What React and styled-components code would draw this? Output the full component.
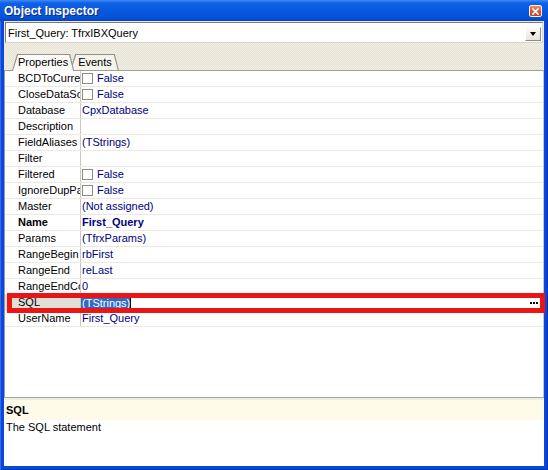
import React from 'react'
import styled, { createGlobalStyle } from 'styled-components'

const GlobalStyle = createGlobalStyle`
  html, body {
    margin: 0;
    padding: 0;
    background: #ffffff;
  }
  body {
    font-family: "Liberation Sans", Arial, sans-serif;
    font-size: 11px;
  }
`

const props = [
  { name: 'BCDToCurrency', value: 'False', check: true },
  { name: 'CloseDataSource', value: 'False', check: true },
  { name: 'Database', value: 'CpxDatabase' },
  { name: 'Description', value: '' },
  { name: 'FieldAliases', value: '(TStrings)' },
  { name: 'Filter', value: '' },
  { name: 'Filtered', value: 'False', check: true },
  { name: 'IgnoreDupParams', value: 'False', check: true },
  { name: 'Master', value: '(Not assigned)' },
  { name: 'Name', value: 'First_Query', bold: true },
  { name: 'Params', value: '(TfrxParams)' },
  { name: 'RangeBegin', value: 'rbFirst' },
  { name: 'RangeEnd', value: 'reLast' },
  { name: 'RangeEndCount', value: '0' },
  { name: 'SQL', value: '(TStrings)', selected: true },
  { name: 'UserName', value: 'First_Query' },
]

const Window = styled.div`
  width: 548px;
  height: 470px;
  display: flex;
  flex-direction: column;
  background: #0b47d9;
  box-shadow: inset 1px 0 #2e6cf0, inset -1px 0 #0636b8, inset 0 -1px #0636b8;
`

const TitleBar = styled.div`
  height: 21px;
  flex-shrink: 0;
  display: flex;
  align-items: center;
  justify-content: space-between;
  padding: 0 6px 0 4px;
  background: linear-gradient(180deg, #3f8cf6 0%, #0e62e6 14%, #0758de 55%, #0552d8 85%, #0444c2 100%);
`

const Title = styled.span`
  color: #ffffff;
  font-weight: bold;
  font-size: 12px;
  text-shadow: 1px 1px #0b2a8a;
`

const CloseButton = styled.div`
  width: 13px;
  height: 12px;
  box-sizing: border-box;
  border: 1px solid #f4f0ee;
  border-radius: 2px;
  background: linear-gradient(180deg, #ee8c6c 0%, #dc5834 50%, #c8401c 100%);
  display: flex;
  align-items: center;
  justify-content: center;
  margin-top: 1px;
`

const Body = styled.div`
  flex: 1;
  margin: 0 4px 4px;
  background: #ece9d8;
  display: flex;
  flex-direction: column;
  min-height: 0;
`

const Combo = styled.div`
  height: 21px;
  margin: 1px 1px 0 1px;
  box-sizing: border-box;
  background: #ffffff;
  border: 1px solid;
  border-color: #7b7b7b #d9d7cc #d9d7cc #7b7b7b;
  display: flex;
  align-items: center;
  padding-left: 2px;
  color: #000000;
`

const ComboText = styled.span`
  flex: 1;
`

const DropButton = styled.div`
  align-self: flex-end;
  width: 16px;
  height: 14px;
  margin: 0 1px 1px 0;
  box-sizing: border-box;
  border: 1px solid;
  border-color: #ffffff #8d8b82 #8d8b82 #ffffff;
  background: linear-gradient(180deg, #fbfaf6 0%, #e6e4da 100%);
  display: flex;
  align-items: center;
  justify-content: center;

  &::after {
    content: '';
    width: 0;
    height: 0;
    border-left: 3.5px solid transparent;
    border-right: 3.5px solid transparent;
    border-top: 4px solid #000000;
  }
`

const TabStrip = styled.div`
  height: 27px;
  flex-shrink: 0;
  display: flex;
  align-items: flex-end;
  padding-left: 8px;
  isolation: isolate;
  background: repeating-conic-gradient(#f2f0e6 0 25%, #e6e3d4 0 50%) 0 0 / 2px 2px;
`

const Tab = styled.div`
  position: relative;
  height: ${p => (p.$active ? 17 : 16)}px;
  margin-bottom: ${p => (p.$active ? -1 : 0)}px;
  margin-left: ${p => (p.$active ? 0 : -4)}px;
  padding: 0 ${p => p.$padR}px 0 ${p => p.$padL}px;
  line-height: 17px;
  color: #000000;
  z-index: ${p => (p.$active ? 2 : 1)};
  background: #94918a;
  clip-path: polygon(5px 0, calc(100% - 4px) 0, 100% 100%, 0 100%);

  &::before {
    content: '';
    position: absolute;
    inset: 1px 1px 0 1px;
    background: ${p => (p.$active ? '#fcfbf7' : '#f4f3ec')};
    clip-path: polygon(5px 0, calc(100% - 4px) 0, 100% 100%, 0 100%);
  }

  span {
    position: relative;
  }
`

const Grid = styled.div`
  flex: 1;
  background: #ffffff;
  border-top: 1px solid #a19f93;
  border-left: 1px solid #9c9a8f;
  border-right: 1px solid #c9c7bc;
  min-height: 0;
`

const Row = styled.div`
  position: relative;
  height: 16px;
  box-sizing: border-box;
  border-bottom: 1px solid #ebe9e0;
  display: grid;
  grid-template-columns: 76px 1fr;
  line-height: 15px;

  ${p => p.$marked && `
    &::after {
      content: '';
      position: absolute;
      top: -2px;
      bottom: -3px;
      left: 2px;
      right: -2px;
      border: 5px solid #ec1515;
      pointer-events: none;
      z-index: 3;
    }
  `}
`

const NameCell = styled.div`
  padding-left: 13px;
  overflow: hidden;
  white-space: nowrap;
  border-right: 1px solid #cac8bd;
  color: #000000;
  font-weight: ${p => (p.$bold ? 'bold' : 'normal')};
  background: ${p => (p.$selected ? '#e2e0d6' : '#ffffff')};
`

const ValueCell = styled.div`
  padding-left: 1px;
  display: flex;
  align-items: center;
  gap: 4px;
  overflow: hidden;
  white-space: nowrap;
  color: #000080;
  font-weight: ${p => (p.$bold ? 'bold' : 'normal')};
`

const CheckBox = styled.span`
  width: 11px;
  height: 11px;
  box-sizing: border-box;
  border: 1px solid #8a8a86;
  background: #ffffff;
  flex-shrink: 0;
`

const Selection = styled.span`
  margin-left: -1px;
  padding: 0 0 0 1px;
  background: #316ac5;
  color: #ffffff;
  line-height: 14px;
  border-right: 1px solid #000000;
`

const Ellipsis = styled.span`
  margin-left: auto;
  margin-right: 11px;
  width: 2px;
  height: 2px;
  background: #000000;
  box-shadow: 3px 0 #000000, 6px 0 #000000;
`

const Splitter = styled.div`
  height: 2px;
  flex-shrink: 0;
  border-top: 1px solid #a7a597;
  background: #f0eee4;
`

const Description = styled.div`
  height: 66px;
  flex-shrink: 0;
  background: #ffffff;
  color: #000000;
`

const DescTitle = styled.div`
  height: 20px;
  line-height: 21px;
  padding-left: 2px;
  font-weight: bold;
  background: #fefce8;
`

const DescText = styled.div`
  line-height: 15px;
  padding-left: 2px;
`

function CloseIcon() {
  return (
    <svg width="7" height="7" viewBox="0 0 7 7">
      <path d="M0.8 0.8 L6.2 6.2 M6.2 0.8 L0.8 6.2" stroke="#ffffff" strokeWidth="1.6" strokeLinecap="square" />
    </svg>
  )
}

export default function App() {
  return (
    <>
      <GlobalStyle />
      <Window>
        <TitleBar>
          <Title>Object Inspector</Title>
          <CloseButton><CloseIcon /></CloseButton>
        </TitleBar>
        <Body>
          <Combo>
            <ComboText>First_Query: TfrxIBXQuery</ComboText>
            <DropButton />
          </Combo>
          <TabStrip>
            <Tab $active $padL={6} $padR={6}><span>Properties</span></Tab>
            <Tab $padL={8} $padR={7}><span>Events</span></Tab>
          </TabStrip>
          <Grid>
            {props.map(p => (
              <Row key={p.name} $marked={p.selected}>
                <NameCell $bold={p.bold} $selected={p.selected}>{p.name}</NameCell>
                <ValueCell $bold={p.bold}>
                  {p.check && <CheckBox />}
                  {p.selected ? <Selection>{p.value}</Selection> : p.value}
                  {p.selected && <Ellipsis />}
                </ValueCell>
              </Row>
            ))}
          </Grid>
          <Splitter />
          <Description>
            <DescTitle>SQL</DescTitle>
            <DescText>The SQL statement</DescText>
          </Description>
        </Body>
      </Window>
    </>
  )
}
